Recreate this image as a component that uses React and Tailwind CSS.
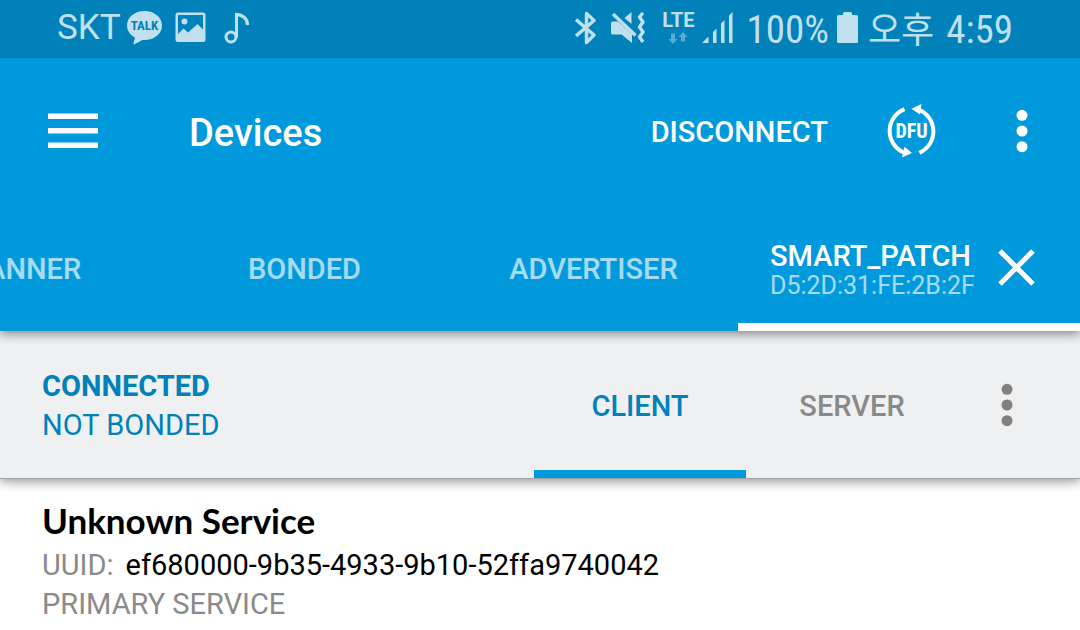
import { useState } from "react";

function TalkIcon() {
  return (
    <svg width="36" height="34" viewBox="0 0 36 34" className="shrink-0" aria-label="Talk">
      <path d="M17.500 0C27.500 0 35 6.300 35 14.500S27.500 29 17.500 29L15.500 29L7 33.500Q6 33.500 6.500 32L8 26.500C3 24 0 19.500 0 14.500C0 6.300 7.500 0 17.500 0Z" fill="#c0e0ee" />
      <text x="17.500" y="19" textAnchor="middle" fontSize="13" fontWeight="700" fill="#0081ba" className="font-['Roboto_Condensed','Roboto',sans-serif]">TALK</text>
    </svg>
  );
}

function PictureIcon() {
  return (
    <svg width="31" height="31" viewBox="0 0 31 31" className="shrink-0">
      <path fillRule="evenodd" fill="#c0e0ee" d="M3 0.500H28Q30.500 .5 30.500 3V27.500Q30.500 30 28 30H3Q.5 30 .5 27.500V3Q.5 .5 3 .5ZM3 3V22L8.500 16.500L13 20.500L22.500 12L28 17.500V3Z" />
      <circle cx="9.500" cy="9.500" r="3" fill="#c0e0ee" />
    </svg>
  );
}

function NoteIcon() {
  return (
    <svg width="26" height="32" viewBox="0 0 26 32" className="shrink-0" fill="none" stroke="#c0e0ee">
      <circle cx="7" cy="25" r="5" strokeWidth="3" />
      <path d="M12.500 25.500V1" strokeWidth="3" />
      <path d="M11 2.300C18 2.500 23.500 6 23.500 13" strokeWidth="3.200" />
    </svg>
  );
}

function BluetoothIcon() {
  return (
    <svg width="22" height="34" viewBox="0 0 22 34" className="shrink-0" fill="none" stroke="#c0e0ee" strokeWidth="3.400" strokeLinejoin="round">
      <path d="M1 8.500L19 24L11.500 31.500V2.500L19 9.500L1 25" />
    </svg>
  );
}

function MuteVibrateIcon() {
  return (
    <svg width="35" height="32" viewBox="0 0 35 32" className="shrink-0" fill="#c0e0ee">
      <path d="M0 11Q0 9.500 1.500 9.500H7L21 22V31L10.500 22.500H1.500Q0 22.500 0 21Z" />
      <path d="M13.500 6L20.500 0V12Z" />
      <path d="M2 2L24.500 23.500" stroke="#c0e0ee" strokeWidth="3.400" />
      <path d="M32 1L28.500 5L32 10L28.500 15L32 20L28.500 25L32 30" fill="none" stroke="#c0e0ee" strokeWidth="3.400" strokeLinejoin="round" />
    </svg>
  );
}

function DataArrows() {
  return (
    <svg width="20" height="12" viewBox="0 0 20 12" fill="#57add4">
      <path d="M3 1.500H7V7H9.500L5 12L.5 7H3Z" />
      <path d="M13 9.500H17V5H19.500L15 0L10.500 5H13Z" />
    </svg>
  );
}

function SignalIcon() {
  return (
    <svg width="32" height="32" viewBox="0 0 32 32" className="shrink-0" fill="#c0e0ee">
      <path d="M0 31L6.500 24.500V31ZM11 20L14.500 16.500V31H11ZM19 11.500L22.500 8V31H19ZM27 3.500L30.500 0V31H27Z" />
    </svg>
  );
}

function BatteryIcon() {
  return (
    <svg width="21" height="31" viewBox="0 0 21 31" className="shrink-0" fill="#c0e0ee">
      <path d="M6 1.500Q6 0 7.500 0H13.500Q15 0 15 1.500V3H19.500Q21 3 21 4.500V29.500Q21 31 19.500 31H1.500Q0 31 0 29.500V4.500Q0 3 1.500 3H6Z" />
    </svg>
  );
}

function MenuIcon() {
  return (
    <svg width="50" height="36" viewBox="0 0 50 36" fill="white">
      <path d="M0 .5H50V6H0ZM0 15H50V20.500H0ZM0 29.500H50V35H0Z" />
    </svg>
  );
}

function DfuIcon() {
  return (
    <svg width="56" height="56" viewBox="0 0 56 56" fill="none" stroke="white" strokeWidth="4">
      <path d="M20.500 6.100A23.500 23.500 0 0 0 21 50" />
      <path d="M35.500 49.800A23.500 23.500 0 0 0 34 6.300" />
      <path d="M20.500 43.800L28 50L18 54.500ZM27.500 5.700L37.500 1L36 11.600Z" fill="white" stroke="none" />
      <text x="27.500" y="35" textAnchor="middle" fontSize="20" fontWeight="700" fill="white" stroke="none" className="font-['Roboto_Condensed','Roboto',sans-serif]">DFU</text>
    </svg>
  );
}

function MoreIcon() {
  return (
    <svg width="12" height="44" viewBox="0 0 12 44" fill="currentColor">
      <circle cx="6" cy="6.300" r="5.500" />
      <circle cx="6" cy="22" r="5.500" />
      <circle cx="6" cy="37.700" r="5.500" />
    </svg>
  );
}

function CloseIcon() {
  return (
    <svg width="38" height="38" viewBox="0 0 38 38" stroke="white" strokeWidth="5">
      <path d="M2 2L35 35M35 2L2 35" />
    </svg>
  );
}

function StatusBar() {
  return (
    <div className="relative z-30 flex h-[58px] items-center justify-between bg-[#0081ba] pr-[67px] pl-[57px] text-[#c0e0ee]">
      <div className="flex items-center pb-[3px]">
        <span className="mr-[6px] text-[35px] leading-none">SKT</span>
        <TalkIcon />
        <div className="ml-3 flex items-center gap-[18px]">
          <PictureIcon />
          <NoteIcon />
        </div>
      </div>
      <div className="flex items-center">
        <div className="flex items-center pb-[2px]">
          <BluetoothIcon />
          <div className="mr-4 ml-[14px] flex"><MuteVibrateIcon /></div>
          <div className="mr-2 flex flex-col items-center gap-1">
            <span className="text-[20px] leading-4 font-bold">LTE</span>
            <DataArrows />
          </div>
          <SignalIcon />
        </div>
        <span className="mr-2 ml-3 pt-[2px] font-['Roboto_Condensed','Roboto',sans-serif] text-[39px] leading-none">100%</span>
        <div className="flex pb-[3px]"><BatteryIcon /></div>
        <span className="ml-[10px] pt-1 text-[36px] leading-none whitespace-nowrap">오후</span>
        <span className="ml-3 pt-[2px] font-['Roboto_Condensed','Roboto',sans-serif] text-[39px] leading-none">4:59</span>
      </div>
    </div>
  );
}

const tabs = ["SCANNER", "BONDED", "ADVERTISER"];

export default function App() {
  const [mode, setMode] = useState("CLIENT");

  return (
    <div className="min-h-screen overflow-hidden bg-white font-['Roboto','Noto_Sans_CJK_KR',sans-serif]">
      <StatusBar />

      <header className="relative z-20 bg-[#009adc] text-white shadow-[0_3px_10px_rgba(0,0,0,0.45)]">
        <div className="flex h-[146px] items-center pr-[52px] pl-12">
          <button aria-label="Open menu"><MenuIcon /></button>
          <h1 className="ml-[91px] pt-1 text-[38px] font-medium">Devices</h1>
          <button className="ml-auto pt-1 text-[29px] font-medium">DISCONNECT</button>
          <button aria-label="Start DFU" className="ml-14"><DfuIcon /></button>
          <button aria-label="More options" className="ml-[76px]"><MoreIcon /></button>
        </div>

        <nav className="flex h-[127px] justify-end overflow-hidden">
          {tabs.map((tab) => (
            <button key={tab} className="w-[289px] shrink-0 pt-1 text-[29px] font-medium text-white/65">{tab}</button>
          ))}
          <div className="flex w-[342px] shrink-0 items-center justify-between border-b-8 border-white pt-2 pr-11 pl-8">
            <button className="pt-[6px] text-left">
              <span className="block text-[29px] leading-[30px] font-medium">SMART_PATCH</span>
              <span className="block text-[25px] leading-[30px] text-white/65">D5:2D:31:FE:2B:2F</span>
            </button>
            <button aria-label="Close tab"><CloseIcon /></button>
          </div>
        </nav>
      </header>

      <section className="relative z-10 flex h-[148px] border-b border-[#a0a3a6] bg-[#eff0f2] pr-6 pl-[42px] shadow-[0_3px_10px_rgba(0,0,0,0.4)]">
        <div className="flex flex-1 flex-col justify-center pt-[2px] text-[29px] leading-[39px] text-[#0081ba]">
          <p className="font-bold">CONNECTED</p>
          <p>NOT BONDED</p>
        </div>
        {["CLIENT", "SERVER"].map((name) => (
          <button key={name} onClick={() => setMode(name)}
            className={`w-[212px] border-y-8 border-t-transparent pt-1 text-[29px] font-medium ${mode === name ? "border-b-[#009adc] text-[#0081ba]" : "border-b-transparent text-[#898989]"}`}>{name}</button>
        ))}
        <button aria-label="Connection options" className="flex w-[98px] items-center justify-center text-[#808080]"><MoreIcon /></button>
      </section>

      <main className="px-[42px] pt-5 text-[29px] leading-[39px]">
        <h2 className="pb-1 font-['Lato',sans-serif] text-[35px] leading-[43px] font-bold">Unknown Service</h2>
        <p><span className="mr-3 text-[#8a8a8a]">UUID:</span>ef680000-9b35-4933-9b10-52ffa9740042</p>
        <p className="text-[#8a8a8a]">PRIMARY SERVICE</p>
      </main>
    </div>
  );
}
